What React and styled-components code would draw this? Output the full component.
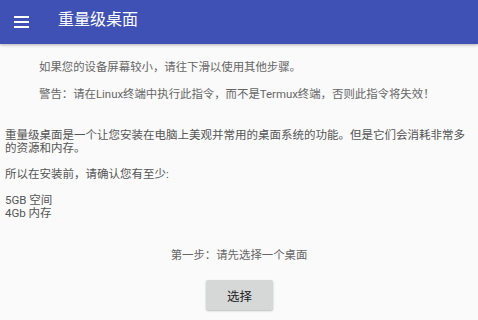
import React from 'react';
import styled, { createGlobalStyle } from 'styled-components';

const Global = createGlobalStyle`
  html, body { margin: 0; padding: 0; background: #fafafa; }
  body {
    font-family: Roboto, "Noto Sans CJK SC", sans-serif;
    width: 478px;
    height: 320px;
    overflow: hidden;
  }
`;

const Toolbar = styled.header`
  display: flex;
  align-items: center;
  height: 44px;
  background: #3f51b5;
  box-shadow: 0 1px 3px rgba(0, 0, 0, 0.3);
  color: #fff;
`;

const MenuButton = styled.div`
  display: flex;
  align-items: center;
  justify-content: center;
  width: 44px;
  height: 44px;
  margin-left: -1px;
  margin-top: -1px;
`;

const Title = styled.h1`
  margin: 0 0 0 15px;
  font-size: 16px;
  font-weight: 400;
  line-height: 20px;
  margin-top: -4px;
`;

const Notice = styled.p`
  margin: ${({ $top }) => $top}px 0 0 39px;
  font-size: 11.4px;
  line-height: 13px;
  color: #666;
`;

const Body = styled.p`
  margin: 28px 0 0 5px;
  padding-right: 8px;
  font-size: 11.5px;
  line-height: 13px;
  color: #555;
  white-space: pre-line;
`;

const Step = styled.p`
  margin: 29px 0 0;
  text-align: center;
  font-size: 11.4px;
  line-height: 13px;
  color: #666;
`;

const Actions = styled.div`
  display: flex;
  justify-content: center;
  margin-top: 18px;
`;

const Button = styled.button`
  width: 67px;
  height: 30px;
  border: none;
  border-radius: 2px;
  background: #d6d7d7;
  box-shadow: 0 1px 2px rgba(0, 0, 0, 0.25);
  font-family: Roboto, "Noto Sans CJK SC", sans-serif;
  font-size: 12.5px;
  color: #222;
  padding: 0;
  margin-left: 1px;
`;

const MenuIcon = () => (
  <svg width="15" height="12" viewBox="0 0 15 12">
    <rect x="0" y="0" width="15" height="2" fill="#fff" />
    <rect x="0" y="5" width="15" height="2" fill="#fff" />
    <rect x="0" y="10" width="15" height="2" fill="#fff" />
  </svg>
);

const bodyText = '重量级桌面是一个让您安装在电脑上美观并常用的桌面系统的功能。但是它们会消耗非常多的资源和内存。\n\n所以在安装前，请确认您有至少:\n\n5GB 空间\n4Gb 内存';

export default function App() {
  return (
    <>
      <Global />
      <Toolbar>
        <MenuButton><MenuIcon /></MenuButton>
        <Title>重量级桌面</Title>
      </Toolbar>
      <Notice $top={17}>如果您的设备屏幕较小，请往下滑以使用其他步骤。</Notice>
      <Notice $top={14}>警告：请在Linux终端中执行此指令，而不是Termux终端，否则此指令将失效！</Notice>
      <Body>{bodyText}</Body>
      <Step>第一步：请先选择一个桌面</Step>
      <Actions>
        <Button>选择</Button>
      </Actions>
    </>
  );
}
